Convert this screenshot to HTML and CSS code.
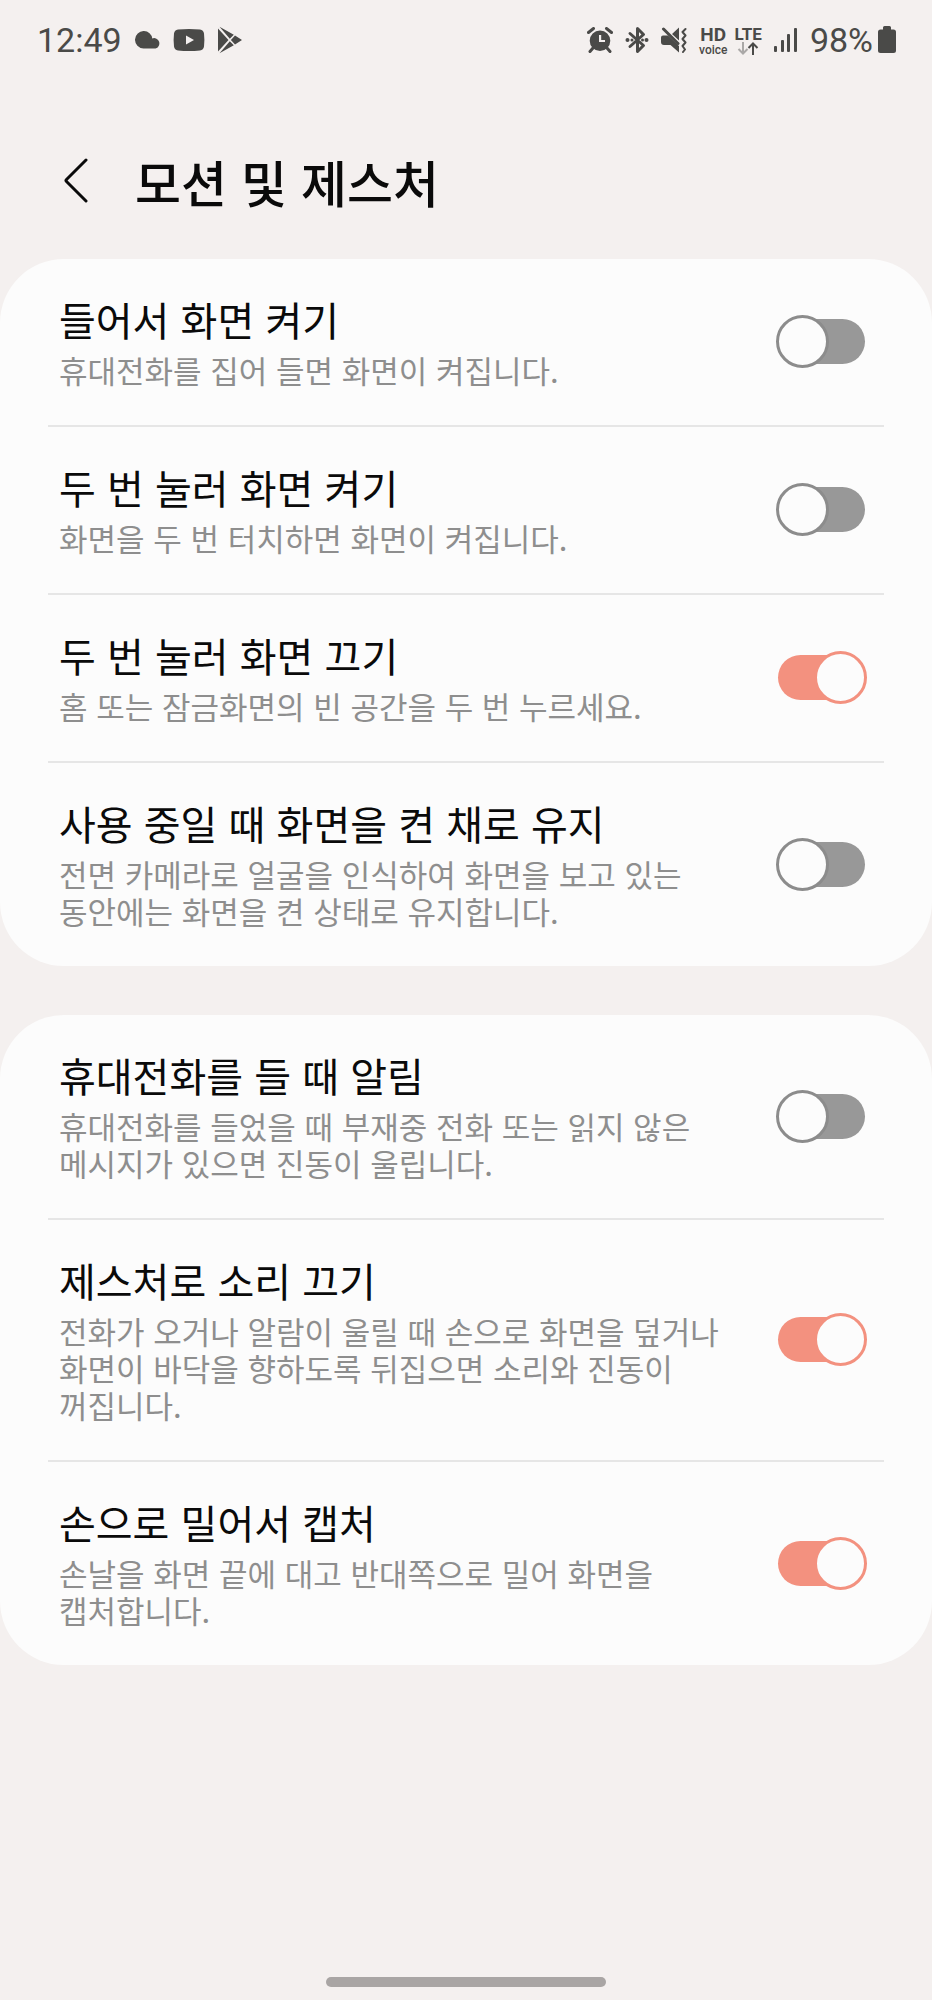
FILE: index.html
```html
<!DOCTYPE html>
<html lang="ko">
  <head>
    <meta charset="UTF-8" />
    <meta name="viewport" content="width=device-width, initial-scale=1.0" />
    <title>모션 및 제스처</title>
    <link rel="stylesheet" href="styles.css">
  </head>
  <body>
    <div class="status-bar">
      <div class="status-left">
        <span class="time">12:49</span>
        <svg class="icon" width="26" height="18" viewBox="0 0 26 18">
          <path d="M9 0a8.500 8.500 0 0 1 8.300 7.400A5.300 5.300 0 1 1 20.500 17.500H8.500A8.700 8.700 0 0 1 9 0z" />
        </svg>
        <svg class="icon" width="32" height="24" viewBox="0 0 32 24">
          <path fill-rule="evenodd" d="M5 1.500Q16 .3 27 1.500Q30.500 2 31 5.500Q31.800 12 31 18.500Q30.500 22 27 22.500Q16 23.700 5 22.500Q1.500 22 1 18.500Q.2 12 1 5.500Q1.500 2 5 1.500zM13 7.500V16.500L21 12z" />
        </svg>
        <svg class="icon" width="26" height="28" viewBox="0 0 26 28">
          <path d="M1 2.500V25.500L11.500 14zM2.500 .8L16.800 8.800 12.800 12.800zM2.500 27.200L16.800 19.200 12.800 15.200zM18 9.600L25 14 18 18.400 13.900 14z" />
        </svg>
      </div>
      <div class="status-right">
        <svg class="icon" width="26" height="26" viewBox="0 0 26 26">
          <path fill-rule="evenodd" d="M13 3.500a10.300 10.300 0 1 1 0 20.600a10.300 10.300 0 0 1 0-20.600zM12 8V15H18V13H14.200V8z" />
          <path class="line" d="M1.500 5.500L6.500 1.500M24.500 5.500L19.500 1.500M6 21L3 24.500M20 21L23 24.500" />
        </svg>
        <svg class="icon" width="24" height="28" viewBox="0 0 24 28">
          <path class="line" d="M5 7.500L18.500 19.500 12.500 25.500V2.500L18.500 8.500 5 20.500" />
          <circle cx="2.500" cy="14" r="2" />
          <circle cx="7" cy="14" r="1.500" />
          <circle cx="17.500" cy="14" r="1.500" />
          <circle cx="21.500" cy="14" r="2" />
        </svg>
        <svg class="icon" width="26" height="26" viewBox="0 0 26 26">
          <path d="M2 8.500H7L18 19V25.500L9.500 18H3Q0 18 0 15V10.500Q0 8.500 2 8.500zM11 7L18 .5V13.500z" />
          <path class="line" d="M2.500 2L17 16.500" />
          <path class="wave" d="M24.500 2L21.500 5 24.500 8.500 21.500 12 24.500 15.500 21.500 19 24 22.500 22 25" />
        </svg>
        <span class="badges">
          <span class="badge">
            <span class="hd">HD</span>
            <span class="voice">voice</span>
          </span>
          <span class="badge">
            <span class="lte">LTE</span>
            <svg width="22" height="13" viewBox="0 0 22 13">
              <path class="down" d="M6 0V11M1.500 7L6 11.500 10.500 7" />
              <path class="up" d="M16 13V2M11.500 6L16 1.500 20.500 6" />
            </svg>
          </span>
        </span>
        <svg class="icon" width="24" height="26" viewBox="0 0 24 26">
          <rect x="0" y="19" width="3" height="6" rx="1" />
          <rect x="7" y="13" width="3" height="12" rx="1" />
          <rect x="13" y="7" width="3" height="18" rx="1" />
          <rect x="20" y="1" width="3" height="24" rx="1" />
        </svg>
        <span class="battery">
          <span>98%</span>
          <svg class="icon" width="18" height="28" viewBox="0 0 18 28">
            <path d="M5 1.500Q5 0 6.500 0H11.500Q13 0 13 1.500V3.500H15.500Q18 3.500 18 6V24.500Q18 27 15.500 27H2.500Q0 27 0 24.500V6Q0 3.500 2.500 3.500H5z" />
          </svg>
        </span>
      </div>
    </div>

    <header class="header">
      <button type="button" class="back" aria-label="뒤로">
        <svg width="24" height="46" viewBox="0 0 24 46">
          <path d="M22 2L2.500 21.500Q1.500 22.500 2.500 23.500L22 43" />
        </svg>
      </button>
      <h1>모션 및 제스처</h1>
    </header>

    <main>
      <section class="card">
        <label class="row">
          <span class="text">
            <span class="title">들어서 화면 켜기</span>
            <span class="desc">휴대전화를 집어 들면 화면이 켜집니다.</span>
          </span>
          <input type="checkbox" role="switch" class="switch" />
        </label>
        <label class="row">
          <span class="text">
            <span class="title">두 번 눌러 화면 켜기</span>
            <span class="desc">화면을 두 번 터치하면 화면이 켜집니다.</span>
          </span>
          <input type="checkbox" role="switch" class="switch" />
        </label>
        <label class="row">
          <span class="text">
            <span class="title">두 번 눌러 화면 끄기</span>
            <span class="desc">홈 또는 잠금화면의 빈 공간을 두 번 누르세요.</span>
          </span>
          <input type="checkbox" role="switch" class="switch" checked />
        </label>
        <label class="row">
          <span class="text">
            <span class="title">사용 중일 때 화면을 켠 채로 유지</span>
            <span class="desc">전면 카메라로 얼굴을 인식하여 화면을 보고 있는 동안에는 화면을 켠 상태로 유지합니다.</span>
          </span>
          <input type="checkbox" role="switch" class="switch" />
        </label>
      </section>

      <section class="card">
        <label class="row">
          <span class="text">
            <span class="title">휴대전화를 들 때 알림</span>
            <span class="desc">휴대전화를 들었을 때 부재중 전화 또는 읽지 않은 메시지가 있으면 진동이 울립니다.</span>
          </span>
          <input type="checkbox" role="switch" class="switch" />
        </label>
        <label class="row">
          <span class="text">
            <span class="title">제스처로 소리 끄기</span>
            <span class="desc">전화가 오거나 알람이 울릴 때 손으로 화면을 덮거나 화면이 바닥을 향하도록 뒤집으면 소리와 진동이 꺼집니다.</span>
          </span>
          <input type="checkbox" role="switch" class="switch" checked />
        </label>
        <label class="row">
          <span class="text">
            <span class="title">손으로 밀어서 캡처</span>
            <span class="desc">손날을 화면 끝에 대고 반대쪽으로 밀어 화면을 캡처합니다.</span>
          </span>
          <input type="checkbox" role="switch" class="switch" checked />
        </label>
      </section>
    </main>

    <div class="nav-handle"></div>
  </body>
</html>
```
FILE: styles.css
```css
*,
*::before,
*::after {
  box-sizing: border-box;
}
body {
  margin: 0;
  min-height: 100vh;
  display: flex;
  flex-direction: column;
  background: #f4f0ef;
  color: #0a0a0a;
  font-family: "Noto Sans CJK KR", sans-serif;
  word-break: keep-all;
}

/* status bar */
.status-bar {
  display: flex;
  justify-content: space-between;
  align-items: center;
  height: 80px;
  padding: 0 36px 0 37px;
  color: #4a4a48;
  font-family: Roboto, sans-serif;
  font-size: 34px;
}
.status-left,
.status-right {
  display: flex;
  align-items: center;
  gap: 12px;
}
.time {
  margin-right: 1px;
}
.icon {
  display: block;
  fill: #4a4a48;
}
.line,
.wave {
  fill: none;
  stroke: #4a4a48;
  stroke-width: 3;
  stroke-linecap: round;
  stroke-linejoin: round;
}
.wave {
  stroke-width: 2;
}
.badges {
  display: flex;
  align-items: center;
  gap: 7px;
}
.badge {
  display: flex;
  flex-direction: column;
  align-items: center;
  font-weight: 700;
}
.hd {
  font-size: 19px;
  line-height: 19px;
}
.voice {
  font-size: 12px;
  font-weight: 500;
  line-height: 12px;
}
.lte {
  font-size: 17px;
  line-height: 16px;
}
.down,
.up {
  fill: none;
  stroke: #4a4a48;
  stroke-width: 2;
}
.down {
  stroke: #aaa8a7;
}
.battery {
  display: flex;
  align-items: center;
  gap: 5px;
}

/* title */
.header {
  display: flex;
  align-items: center;
  gap: 47px;
  height: 179px;
  padding: 23px 64px 0;
}
.header h1 {
  margin: 0;
  font-size: 50px;
  font-weight: 500;
  line-height: 60px;
}
.back {
  display: flex;
  padding: 0;
  border: none;
  background: none;
  cursor: pointer;
}
.back path {
  fill: none;
  stroke: #0a0a0a;
  stroke-width: 3;
  stroke-linecap: round;
}
.nav-handle {
  width: 30%;
  height: 10px;
  margin: auto auto 13px;
  border-radius: 5px;
  background: #a9a5a4;
}

/* settings list */
.card {
  margin-bottom: 49px;
  padding: 0 48px;
  border-radius: 64px;
  background: #fcfcfc;
}
.row {
  display: flex;
  align-items: center;
  justify-content: space-between;
  gap: 48px;
  padding: 36px 17px 37px 11px;
  border-bottom: 2px solid #e6e6e6;
  cursor: pointer;
}
.row:last-child {
  border-bottom: none;
}
.text {
  display: flex;
  flex-direction: column;
  gap: 8px;
}
.title {
  font-size: 40px;
  line-height: 48px;
}
.desc {
  color: #8e8e8e;
  font-size: 31px;
  line-height: 37px;
}

.switch {
  appearance: none;
  display: grid;
  align-items: center;
  flex: none;
  width: 91px;
  height: 53px;
  margin: 0;
  cursor: pointer;
}
.switch::before,
.switch::after {
  content: "";
  grid-area: 1 / 1;
}
.switch::before {
  height: 45px;
  margin: 0 2px;
  border-radius: 23px;
  background: #989898;
}
.switch::after {
  width: 53px;
  height: 53px;
  border: 3px solid #8c8c8c;
  border-radius: 50%;
  background: #fcfcfc;
}
.switch:checked::before {
  background: #f3917f;
}
.switch:checked::after {
  justify-self: end;
  border-color: #f3917f;
}
```
